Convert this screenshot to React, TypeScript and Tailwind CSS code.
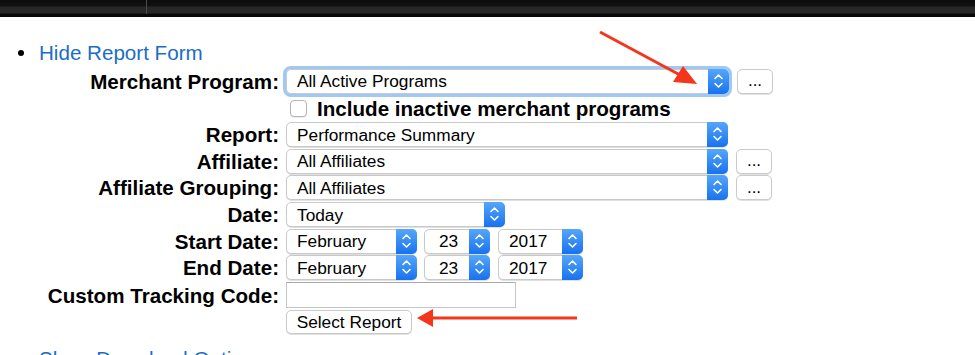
import React from "react";

const Stepper = () => (
  <div className="w-[21px] -my-px -mr-px self-stretch rounded-r-[5px] bg-[linear-gradient(#55a6fb,#1872ef)] flex items-center justify-center">
    <svg width="21" height="25" viewBox="0 0 21 25" fill="none">
      <polyline points="7,9.5 10.5,6 14,9.5" stroke="white" strokeWidth="1.6" strokeLinecap="round" strokeLinejoin="round" />
      <polyline points="7,14.5 10.5,18 14,14.5" stroke="white" strokeWidth="1.6" strokeLinecap="round" strokeLinejoin="round" />
    </svg>
  </div>
);

const Select = ({ text, w, focus = false, padL = "pl-[10px]" }: { text: string; w: string; focus?: boolean; padL?: string }) => (
  <div
    className={`${w} h-[25px] flex items-center bg-white rounded-[5px] border border-[#c9c9c9] shadow-[0_1px_0_rgba(0,0,0,0.12)] ${
      focus ? "outline outline-[3px] outline-[#9fc9f4] border-[#7fb2ec]" : ""
    }`}
  >
    <span className={`flex-1 ${padL} text-[17.3px] text-black leading-[20px] whitespace-nowrap`}>{text}</span>
    <Stepper />
  </div>
);

const Dots = () => (
  <div className="w-[36px] h-[25px] ml-[8px] flex items-center justify-center bg-white rounded-[5px] border border-[#cbcbcb] shadow-[0_1px_0_rgba(0,0,0,0.12)] text-[17px] leading-[20px]">
    ...
  </div>
);

const Row = ({ h, label, children }: { h: string; label?: string; children: React.ReactNode }) => (
  <div className={`${h} flex items-center`}>
    <div className="w-[279px] shrink-0 text-right font-bold text-[20.6px] leading-[23px] text-black whitespace-nowrap">{label}</div>
    <div className="ml-[7px] flex items-center">{children}</div>
  </div>
);

export default function App() {
  return (
    <div className="relative w-[975px] h-[355px] overflow-hidden bg-white font-['Liberation_Sans',Arial,sans-serif]">
      <div className="relative h-[17px] bg-[linear-gradient(#0c0c0c_0px,#111_6px,#262626_7px,#2a2a2a_13px,#0b0b0b_14px,#050505_17px)]">
        <div className="absolute left-[146px] top-0 h-[14px] w-px bg-[#4a4a4a]" />
      </div>

      <div className="h-[24px] mt-[24px] flex items-center">
        <div className="w-[6px] h-[6px] rounded-full bg-black ml-[18px]" />
        <span className="ml-[15px] text-[20.6px] leading-[24px] text-[#1a6dc6]">Hide Report Form</span>
      </div>

      <div className="mt-[2px]">
        <Row h="h-[28px]" label="Merchant Program:">
          <Select text="All Active Programs" w="w-[443px]" focus />
          <Dots />
        </Row>
        <Row h="h-[26px]">
          <div className="w-[17px] h-[17px] ml-[4px] rounded-[4px] border border-[#b3b3b3] bg-white shadow-[0_1px_1px_rgba(0,0,0,0.08)]" />
          <span className="ml-[10px] font-bold text-[20.6px] leading-[23px] text-black whitespace-nowrap">Include inactive merchant programs</span>
        </Row>
        <Row h="h-[27px]" label="Report:">
          <Select text="Performance Summary" w="w-[442px]" />
        </Row>
        <Row h="h-[26px]" label="Affiliate:">
          <Select text="All Affiliates" w="w-[442px]" />
          <Dots />
        </Row>
        <Row h="h-[27px]" label="Affiliate Grouping:">
          <Select text="All Affiliates" w="w-[442px]" />
          <Dots />
        </Row>
        <Row h="h-[27px]" label="Date:">
          <Select text="Today" w="w-[219px]" />
        </Row>
        <Row h="h-[26px]" label="Start Date:">
          <Select text="February" w="w-[131px]" />
          <div className="ml-[7px]">
            <Select text="23" w="w-[66px]" padL="pl-[14px]" />
          </div>
          <div className="ml-[8px]">
            <Select text="2017" w="w-[85px]" />
          </div>
        </Row>
        <Row h="h-[27px]" label="End Date:">
          <Select text="February" w="w-[131px]" />
          <div className="ml-[7px]">
            <Select text="23" w="w-[66px]" padL="pl-[14px]" />
          </div>
          <div className="ml-[8px]">
            <Select text="2017" w="w-[85px]" />
          </div>
        </Row>
        <Row h="h-[28px]" label="Custom Tracking Code:">
          <div className="w-[230px] h-[26px] bg-white border border-[#c6c6c6] border-t-[#a9a9a9]" />
        </Row>
        <Row h="h-[26px]">
          <div className="w-[126px] h-[24px] flex items-center justify-center bg-white rounded-[5px] border border-[#c9c9c9] shadow-[0_1px_0_rgba(0,0,0,0.12)] text-[17.3px] leading-[20px] text-black">
            Select Report
          </div>
        </Row>
      </div>

      <div className="h-[24px] mt-[12px] flex items-center">
        <div className="w-[6px] h-[6px] rounded-full bg-black ml-[18px]" />
        <span className="ml-[15px] text-[20.6px] leading-[24px] text-[#1a6dc6]">Show Download Options</span>
      </div>

      <svg className="absolute inset-0 pointer-events-none" width="975" height="355">
        <line x1="600" y1="32" x2="680" y2="75" stroke="#f4361d" strokeWidth="3" />
        <polygon points="697,84 673,82 683,66" fill="#f4361d" />
        <line x1="577" y1="318" x2="430" y2="318" stroke="#f4361d" strokeWidth="3" />
        <polygon points="417,318 433,309 433,327" fill="#f4361d" />
      </svg>
    </div>
  );
}
